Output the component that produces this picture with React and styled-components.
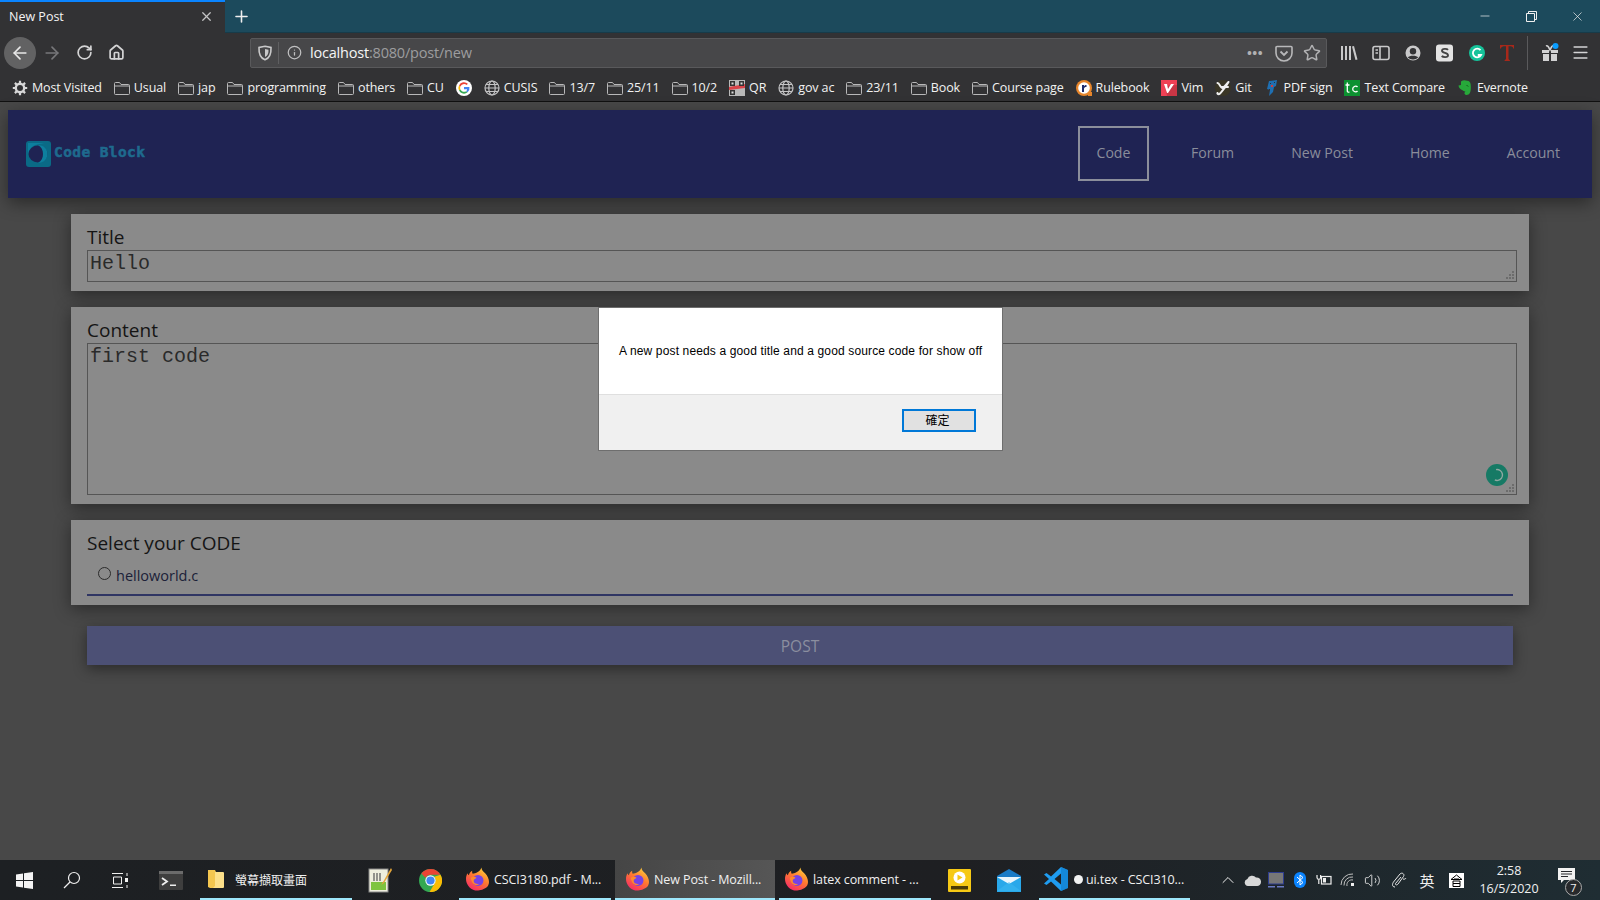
import React, { useId } from "react";
import styled, { createGlobalStyle } from "styled-components";
import {
  ArrowLeft, ArrowRight, RotateCw, Home, Star, Info, Minus, X, Plus, Menu, ChevronUp, Volume2,
} from "lucide-react";

const GlobalStyle = createGlobalStyle`
  html, body { margin: 0; padding: 0; height: 100%; overflow: hidden; }
  body { font-family: "Open Sans", "Noto Sans CJK TC", sans-serif; background: #484848; }
  * { box-sizing: border-box; }
`;

const Screen = styled.div`
  width: 1600px;
  height: 900px;
  display: flex;
  flex-direction: column;
  position: relative;
  overflow: hidden;
`;

/* ---------- tab strip ---------- */
const TabStrip = styled.div`
  height: 33px;
  flex: none;
  display: flex;
  align-items: stretch;
  background: #1c4a5c;
  border-bottom: 1px solid #173b49;
`;

const Tab = styled.div`
  width: 225px;
  height: 33px;
  display: flex;
  align-items: center;
  justify-content: space-between;
  padding: 0 11px 2px 9px;
  background: #323234;
  border-top: 2px solid #0a84ff;
  color: #f4f4f4;
  font-size: 12.5px;
`;

const NewTab = styled.div`
  width: 32px;
  display: flex;
  align-items: center;
  justify-content: center;
  color: #eee;
`;

const WindowControls = styled.div`
  margin-left: auto;
  display: flex;
`;

const WindowButton = styled.div`
  width: 46px;
  display: flex;
  align-items: center;
  justify-content: center;
  color: #f0f0f0;
`;

/* ---------- toolbar ---------- */
const Toolbar = styled.div`
  height: 37px;
  flex: none;
  display: flex;
  align-items: center;
  padding: 2px 0 0 4px;
  background: #323234;
`;

const ToolButton = styled.div`
  width: 32px;
  height: 32px;
  flex: none;
  margin-left: ${(p) => p.$ml || 0}px;
  display: flex;
  align-items: center;
  justify-content: center;
  border-radius: 50%;
  background: ${(p) => (p.$active ? "#626263" : "transparent")};
  color: ${(p) => p.$color || "#d4d4d5"};
`;

const UrlBar = styled.div`
  width: 1077px;
  height: 30px;
  margin-left: 118px;
  margin-right: 6px;
  flex: none;
  display: flex;
  align-items: center;
  padding-left: 6px;
  background: #474749;
  border: 1px solid #59595b;
  border-radius: 2px;
  font-size: 14.5px;
`;

const UrlDivider = styled.span`
  width: 1px;
  height: 22px;
  background: #5f5f61;
  margin: 0 8px 0 5px;
`;

const Host = styled.span`
  color: #f5f5f5;
  margin-left: 8px;
  letter-spacing: -0.2px;
`;

const UrlPath = styled.span`
  color: #9d9d9f;
  letter-spacing: -0.2px;
`;

const UrlActions = styled.div`
  margin-left: auto;
  display: flex;
  align-items: center;
  gap: 10px;
  padding-right: 5px;
  color: #b1b1b3;
`;

const Dots = styled.span`
  width: 20px;
  text-align: center;
  font-weight: 700;
  font-size: 13px;
  letter-spacing: 0.5px;
  line-height: 10px;
`;

const ToolSeparator = styled.span`
  width: 1px;
  height: 34px;
  margin: 0 6px 0 4px;
  background: #5a5a5c;
`;

/* ---------- bookmarks ---------- */
const Bookmarks = styled.div`
  height: 32px;
  flex: none;
  display: flex;
  align-items: center;
  gap: 12px;
  padding: 4px 0 0 12px;
  background: #323234;
  border-bottom: 1px solid #111;
  color: #f2f2f2;
  font-size: 12.5px;
  white-space: nowrap;
`;

const Bookmark = styled.div`
  display: flex;
  align-items: center;
  gap: 4px;
  letter-spacing: -0.12px;
`;

/* ---------- page ---------- */
const Page = styled.main`
  flex: 1;
  min-height: 0;
  display: flex;
  flex-direction: column;
  padding: 8px 8px 0;
  background: #484848;
`;

const NavBar = styled.nav`
  height: 88px;
  flex: none;
  display: flex;
  align-items: center;
  padding: 0 32px 0 18px;
  background: #1f2353;
  box-shadow: 0 5px 16px rgba(0, 0, 0, 0.42);
`;

const Logo = styled.div`
  display: flex;
  align-items: center;
  gap: 3px;
  color: #1e6a8e;
  font: 700 14.5px "DejaVu Sans Mono", monospace;
  letter-spacing: 0.4px;
  -webkit-text-stroke: 0.5px #1e6a8e;
`;

const LogoText = styled.span`
  margin-top: -4px;
`;

const NavLinks = styled.div`
  margin-left: auto;
  display: flex;
  align-items: center;
  gap: 17px;
`;

const NavLink = styled.a`
  height: 55px;
  margin-top: -2px;
  display: flex;
  align-items: center;
  padding: 0 ${(p) => (p.$boxed ? "16.5px" : "20px")} 2px;
  margin-right: ${(p) => (p.$boxed ? "5px" : "0")};
  border: ${(p) => (p.$boxed ? "2px solid #8b8e9b" : "none")};
  color: #8a8d9b;
  font-size: 14.1px;
`;

const NavLast = styled(NavLink)`
  padding-right: 0;
`;

const Form = styled.form`
  display: flex;
  flex-direction: column;
  gap: 16px;
  margin: 16px 63px 0;
`;

const Card = styled.section`
  height: ${(p) => p.$height}px;
  padding: 10px 12px 0 16px;
  background: #8a8a8a;
  box-shadow: 0 4px 16px rgba(0, 0, 0, 0.42);
  color: #151515;
`;

const Label = styled.label`
  display: block;
  height: 26px;
  font-size: 19px;
  line-height: 26px;
`;

const FieldWrap = styled.div`
  position: relative;
  height: ${(p) => p.$height}px;
`;

const Field = styled.textarea`
  display: block;
  width: 100%;
  height: 100%;
  padding: 3px 2px 0;
  background: transparent;
  border: 1px solid #555;
  border-radius: 0;
  outline: none;
  resize: none;
  overflow: hidden;
  color: #2a2a2a;
  font: 20px/20px "Liberation Mono", monospace;
`;

const Grip = styled.svg`
  position: absolute;
  right: 3px;
  bottom: 3px;
`;

const GrammarlyBadge = styled.svg`
  position: absolute;
  right: 9px;
  bottom: 9px;
`;

const RadioRow = styled.div`
  height: 38px;
  padding-left: 11px;
  display: flex;
  align-items: center;
  gap: 5px;
  font-size: 14.5px;
  color: #1b2138;
`;

const Radio = styled.span`
  width: 13px;
  height: 13px;
  margin-top: -4px;
  border: 1px solid #2b2b2b;
  border-radius: 50%;
`;

const Rule = styled.div`
  height: 2px;
  margin-right: 4px;
  background: #2f3563;
`;

const PostButton = styled.button`
  height: 39px;
  margin: 5px 16px 0;
  border: none;
  background: #4c5075;
  box-shadow: 0 4px 14px rgba(0, 0, 0, 0.42);
  color: #8b8e9f;
  font: 15.5px "Open Sans", sans-serif;
`;

/* ---------- alert dialog ---------- */
const Dialog = styled.div`
  position: absolute;
  left: 599px;
  top: 308px;
  width: 403px;
  height: 142px;
  display: flex;
  flex-direction: column;
  background: #f0f0f0;
  box-shadow: 0 0 0 1px #6e6e6e;
`;

const DialogBody = styled.div`
  height: 87px;
  display: flex;
  align-items: center;
  padding: 0 0 0 20px;
  background: #fff;
  border-bottom: 1px solid #dfdfdf;
  color: #000;
  font: 12px "Liberation Sans", Arial, sans-serif;
  letter-spacing: 0.14px;
`;

const DialogFoot = styled.div`
  flex: 1;
  display: flex;
  justify-content: flex-end;
  padding: 14px 26px 0 0;
`;

const OkButton = styled.button`
  width: 74px;
  height: 23px;
  padding: 0 3px 2px 0;
  border: 2px solid #0078d7;
  background: #e1e1e1;
  color: #000;
  font: 12px "Noto Sans CJK TC", sans-serif;
`;

/* ---------- taskbar ---------- */
const Taskbar = styled.footer`
  height: 40px;
  flex: none;
  display: flex;
  align-items: stretch;
  background: linear-gradient(90deg, #1d2023 0%, #1e1f22 60%, #1f2d33 100%);
  color: #f0f0f0;
  font-size: 12.5px;
`;

const TaskIcon = styled.div`
  width: 48px;
  flex: none;
  margin-left: ${(p) => p.$ml || 0}px;
  display: flex;
  align-items: center;
  justify-content: center;
`;

const TaskWindow = styled.div`
  width: ${(p) => p.$w}px;
  flex: none;
  margin-left: ${(p) => p.$ml}px;
  padding-left: ${(p) => p.$pad}px;
  display: flex;
  align-items: center;
  gap: ${(p) => p.$gap || 5}px;
  white-space: nowrap;
  border-bottom: 2px solid #9ee7fb;
  background: ${(p) => (p.$active ? "linear-gradient(90deg, #454545, #565656)" : "transparent")};
  letter-spacing: -0.1px;
`;

const CjkTitle = styled.span`
  font: 12px "Noto Sans CJK TC", sans-serif;
  letter-spacing: 0;
`;

const UnsavedDot = styled.span`
  width: 9px;
  height: 9px;
  margin: 0 -2px 0 1px;
  border-radius: 50%;
  background: #f2f2f2;
`;

const Tray = styled.div`
  margin-left: auto;
  display: flex;
  align-items: stretch;
`;

const TraySlot = styled.div`
  width: ${(p) => p.$w || 24}px;
  display: flex;
  align-items: center;
  justify-content: center;
  font-size: 15px;
`;

const Clock = styled.div`
  width: 74px;
  display: flex;
  flex-direction: column;
  align-items: center;
  justify-content: center;
  line-height: 18px;
  font-size: 12.5px;
`;

const Notify = styled.div`
  width: 54px;
  position: relative;
  display: flex;
  align-items: center;
  justify-content: center;
  padding: 0 14px 8px 0;
`;

const NotifyCount = styled.span`
  position: absolute;
  left: 19px;
  top: 19px;
  width: 17px;
  height: 17px;
  border-radius: 50%;
  border: 1px solid #aaa;
  background: #27292c;
  font-size: 11px;
  line-height: 15px;
  text-align: center;
`;

/* ---------- drawn icons ---------- */
const Folder = () => (
  <svg width="16" height="16" viewBox="0 0 16 16" fill="none" stroke="#b8b8b9" strokeWidth="1">
    <path d="M.5 3.5V13.5a1 1 0 0 0 1 1h13a1 1 0 0 0 1-1V5.5a1 1 0 0 0-1-1H7L5.5 2.5h-4a1 1 0 0 0-1 1zM.5 6h15" />
  </svg>
);

const GlobeIcon = () => (
  <svg width="16" height="16" viewBox="0 0 16 16" fill="none" stroke="#c4c4c5" strokeWidth="1.2">
    <circle cx="8" cy="8" r="7" />
    <ellipse cx="8" cy="8" rx="3.2" ry="7" />
    <path d="M1 8h14M2 4.5h12M2 11.5h12" />
  </svg>
);

const GearIcon = () => (
  <svg width="16" height="16" viewBox="0 0 16 16">
    <circle cx="8" cy="8" r="4.2" fill="none" stroke="#d8d8d8" strokeWidth="2.4" />
    <path d="M8 .8v3M8 12.2v3M.8 8h3M12.2 8h3M2.9 2.9L5 5M11 11l2.1 2.1M13.1 2.9L11 5M5 11l-2.1 2.1" stroke="#d8d8d8" strokeWidth="2.2" />
  </svg>
);

const GoogleIcon = () => (
  <svg width="16" height="16" viewBox="0 0 16 16">
    <circle cx="8" cy="8" r="8" fill="#fff" />
    <path d="M8 4a4 4 0 0 1 2.7 1l1.2-1.2A5.6 5.6 0 0 0 3 5.4l1.4 1.1A4 4 0 0 1 8 4z" fill="#ea4335" />
    <path d="M4.4 6.5L3 5.4a5.6 5.6 0 0 0 0 5.2l1.4-1.1a4 4 0 0 1 0-3z" fill="#fbbc05" />
    <path d="M4.4 9.5L3 10.6a5.6 5.6 0 0 0 8.6 1.7l-1.4-1.1A4 4 0 0 1 4.4 9.5z" fill="#34a853" />
    <path d="M13.4 7H8v2.2h3.1a2.7 2.7 0 0 1-.9 2l1.4 1.1A5.6 5.6 0 0 0 13.4 7z" fill="#4285f4" />
  </svg>
);

const QrIcon = () => (
  <svg width="16" height="16" viewBox="0 0 16 16">
    <rect width="16" height="16" fill="#b9b9b9" />
    <path d="M0 7l16-3v4L0 10z" fill="#d9444a" />
    <path d="M1 1h5v5H1zM10 1h5v5h-5zM1 10h5v5H1z" fill="#333" />
    <path d="M2.500 2.500h2v2h-2zM11.500 2.500h2v2h-2zM2.500 11.500h2v2h-2z" fill="#ddd" />
  </svg>
);

const RulebookIcon = () => (
  <svg width="16" height="16" viewBox="0 0 16 16">
    <circle cx="8" cy="8" r="8" fill="#e8862b" />
    <circle cx="8" cy="8" r="5.8" fill="#fff" />
    <path d="M6 12V5h2v1.200C8.600 5.300 9.400 5 10.500 5v2C9 7 8 7.500 8 9v3z" fill="#1d2a6b" />
    <rect x="12" y="12" width="4" height="4" fill="#e8862b" />
  </svg>
);

const VimIcon = () => (
  <svg width="16" height="16" viewBox="0 0 16 16">
    <rect width="16" height="16" fill="#ef4155" />
    <path d="M16 5v11H6L4 6z" fill="#c93645" />
    <path d="M3 4l3 0 1 5 3-5h3l-6 9H6z" fill="#fff" />
  </svg>
);

const GitIcon = () => (
  <svg width="16" height="16" viewBox="0 0 16 16" fill="none" stroke="#f0f0f0" strokeWidth="2" strokeLinecap="round">
    <circle cx="8" cy="8" r="8" fill="#3a3626" stroke="none" />
    <path d="M2.500 3c2 0 3 5 4.500 5s4-3 6.500-6M13.500 2C11 7 8 10 5 13.500c-1.500 1.500-3 .5-2.500-.5M6 7h7" />
  </svg>
);

const PdfIcon = () => (
  <svg width="16" height="16" viewBox="0 0 16 16">
    <path d="M5 1l8-1-1 6-2 1-1 5-4 4 1-6-3-1z" fill="#1f6fb2" />
    <path d="M7 5h2v2H7z" fill="#d23b3b" />
    <path d="M6 3h1v1H6zM10 2h1v1h-1zM5 9h1v1H5z" fill="#323234" />
  </svg>
);

const TextCompareIcon = () => (
  <svg width="16" height="16" viewBox="0 0 16 16">
    <rect width="16" height="16" fill="#0c9130" />
    <path d="M1.500 5h4M3.300 2.500V11c0 1 .7 1.300 2.200 1.200" stroke="#fff" strokeWidth="1.300" fill="none" />
    <path d="M13.500 7c-1-1.300-4.800-1.300-4.800 2s3.800 3.300 4.800 2" stroke="#fff" strokeWidth="1.300" fill="none" />
  </svg>
);

const EvernoteIcon = () => (
  <svg width="16" height="16" viewBox="0 0 16 16">
    <path d="M4 1.500C6 0 8 0 10 .8c2.500.2 3.500 1.500 3.700 4 .3 3 .2 6-.7 8-1 2-3 2.600-4.500 2-1.500-.6-1.300-2.500 0-3-1.500-.5-2.500-1-3-1.500C3.500 9.500 1.800 8 1.500 5.500L4 5z" fill="#27a83a" />
    <path d="M9.500 5.500c1 0 1.500.3 1.800 1" stroke="#12601e" fill="none" />
  </svg>
);

const ShieldIcon = () => (
  <svg width="16" height="16" viewBox="0 0 16 16" fill="none" stroke="#c9c9ca" strokeWidth="1.6">
    <path d="M8 1.200l6 1.300c.3 6-1 10.500-6 12.300C3 13 1.700 8.500 2 2.500z" />
    <path d="M8 4l3.500.8C11.600 8 11 10.500 8 12z" fill="#c9c9ca" stroke="none" />
  </svg>
);

const PocketIcon = () => (
  <svg width="18" height="18" viewBox="0 0 18 18" fill="none" stroke="#b8b8ba" strokeWidth="1.6">
    <path d="M2 2.500h14a1 1 0 0 1 1 1V9a8 8 0 0 1-16 0V3.500a1 1 0 0 1 1-1z" />
    <path d="M5.500 7.500L9 11l3.500-3.500" strokeWidth="1.800" />
  </svg>
);

const LibraryIcon = () => (
  <svg width="18" height="16" viewBox="0 0 18 16" fill="#c9c9ca">
    <path d="M1 1h2v14H1zM5 1h2v14H5zM9 1h2v14H9zM12 1.500l2-.5 3.500 13.500-2 .5z" />
  </svg>
);

const SidebarIcon = () => (
  <svg width="18" height="16" viewBox="0 0 18 16" fill="none" stroke="#c9c9ca" strokeWidth="1.600">
    <rect x="1" y="1.500" width="16" height="13" rx="2" />
    <path d="M8 1.500v13M3.500 5h2.500M3.500 8h2.500" />
  </svg>
);

const AccountIcon = () => (
  <svg width="16" height="16" viewBox="0 0 16 16">
    <circle cx="8" cy="8" r="7.500" fill="#c9c9ca" />
    <circle cx="8" cy="6.300" r="3.200" fill="#323234" />
    <path d="M2.800 12.500c1.500-2.500 8.900-2.500 10.400 0A7 7 0 0 1 8 14.500a7 7 0 0 1-5.200-2z" fill="#323234" />
  </svg>
);

const SkypeLikeIcon = () => (
  <svg width="18" height="18" viewBox="0 0 18 18">
    <rect width="17" height="17" y=".5" rx="3" fill="#e3e3e3" />
    <path d="M12 5.800C11 4.600 6 4.200 6 6.800c0 2.600 6 1.600 6 4.400 0 2.600-5 2.200-6.300.8" fill="none" stroke="#444" strokeWidth="1.900" />
  </svg>
);

const GrammarlyIcon = ({ size = 16 }) => (
  <svg width={size} height={size} viewBox="0 0 16 16">
    <circle cx="8" cy="8" r="8" fill="#15c39a" />
    <path d="M11.500 5.200A4.300 4.300 0 1 0 12 10H8.800" fill="none" stroke="#fff" strokeWidth="1.800" />
  </svg>
);

const RedTIcon = () => (
  <svg width="16" height="18" viewBox="0 0 16 18" fill="#a8281a">
    <path d="M1 1h14v3.500h-.8c-.3-1.800-1-2.200-4.700-2.200V15l1.500 1.500V17H5.500v-.5L7 15V2.300C3.300 2.300 2.600 2.700 2 4.500H1z" />
  </svg>
);

const GiftIcon = () => (
  <svg width="20" height="20" viewBox="0 0 20 20">
    <path d="M2 7h7v3H2zM11 7h7v3h-7zM3 11h6v7H3zM11 11h6v7h-6z" fill="#d2d2d3" />
    <path d="M6 3c2-1 3 2 4 4 1-2 2-5 4-4" fill="none" stroke="#d2d2d3" strokeWidth="1.600" />
    <circle cx="15.500" cy="3" r="3" fill="#0a9dff" />
  </svg>
);

const WindowsLogo = () => (
  <svg width="17" height="17" viewBox="0 0 17 17" fill="#f4f4f4">
    <path d="M0 2.400L7 1.400V8H0zM8 1.300L17 0V8H8zM0 9h7v6.600L0 14.600zM8 9h9v8l-9-1.300z" />
  </svg>
);

const SearchGlass = () => (
  <svg width="18" height="18" viewBox="0 0 18 18" fill="none" stroke="#f0f0f0" strokeWidth="1.200">
    <circle cx="11" cy="7" r="5.500" />
    <path d="M7 11l-6 6" />
  </svg>
);

const TaskViewIcon = () => (
  <svg width="17" height="17" viewBox="0 0 17 17" fill="none" stroke="#f0f0f0" strokeWidth="1">
    <path d="M0 1.500h11M0 15.500h11M1.500 5h8v7h-8zM15 1v3M15 13v3" />
    <rect x="13" y="6" width="3" height="4" fill="#f0f0f0" stroke="none" />
  </svg>
);

const TerminalIcon = () => (
  <svg width="24" height="19" viewBox="0 0 24 19">
    <rect width="24" height="19" rx="1" fill="#3e3e3e" />
    <rect width="24" height="3" fill="#6b6b6b" />
    <path d="M3 7l5 3.500L3 14" fill="none" stroke="#eee" strokeWidth="1.800" />
    <rect x="11" y="13.500" width="6" height="1.500" fill="#eee" />
  </svg>
);

const FilesIcon = () => (
  <svg width="16" height="20" viewBox="0 0 16 20">
    <path d="M0 1h7l1 2v16H2l-2-1z" fill="#f4c64f" />
    <path d="M7 3h8a1 1 0 0 1 1 1v14a1 1 0 0 1-1 1H5l2-2z" fill="#fde08a" />
  </svg>
);

const NotepadIcon = () => (
  <svg width="24" height="26" viewBox="0 0 24 26">
    <rect x="1" y="2" width="19" height="23" fill="#eeeedd" stroke="#888" />
    <rect x="3" y="15" width="15" height="8" fill="#7ec440" />
    <path d="M6 6v8M9 6v8M12 6v8" stroke="#555" strokeWidth="1.200" />
    <path d="M23 1L15 15l-2 3 3-2L24 3z" fill="#e3a53a" />
  </svg>
);

const ChromeIcon = () => (
  <svg width="23" height="23" viewBox="0 0 24 24">
    <circle cx="12" cy="12" r="12" fill="#34a853" />
    <path d="M12 0a12 12 0 0 1 10.400 6H12a6 6 0 0 0-5.200 3L2.500 4.700A12 12 0 0 1 12 0z" fill="#ea4335" />
    <path d="M22.400 6A12 12 0 0 1 11 24l5.200-9A6 6 0 0 0 16 8z" fill="#fbbc05" />
    <circle cx="12" cy="12" r="5.400" fill="#fff" />
    <circle cx="12" cy="12" r="4.300" fill="#4285f4" />
  </svg>
);

const FirefoxIcon = () => {
  const id = useId();
  return (
    <svg width="23" height="24" viewBox="0 0 24 24">
      <defs>
        <linearGradient id={`${id}a`} x1="0.8" y1="0" x2="0.2" y2="1">
          <stop offset="0" stopColor="#ffd43b" />
          <stop offset="0.45" stopColor="#ff7a2f" />
          <stop offset="1" stopColor="#f5266b" />
        </linearGradient>
      </defs>
      <path d="M16 0c.3 3 2 4 4 6 2.500 2.500 4 6 4 9a11.500 9 0 0 1-12 9A12 12 0 0 1 0 12c0-2.500.6-4 1.500-6 .3 1 .8 1.700 1.500 2 .5-2 1.800-3.500 3.500-4.500C6.200 5 6.500 6 7 6.500c3-.5 8-2 9-6.500z" fill={`url(#${id}a)`} />
      <circle cx="12.500" cy="13.500" r="5.700" fill="#7542e5" />
      <path d="M5 11c2-2 5-1.500 6 0-1 1-3 1-3 3s3 4 6 3c-3 3-8 1-9-6z" fill="#ff8a2b" />
    </svg>
  );
};

const PlayerIcon = () => (
  <svg width="23" height="23" viewBox="0 0 23 23">
    <rect width="23" height="23" rx="1" fill="#f6c915" />
    <circle cx="11.500" cy="8.500" r="6" fill="#fff" />
    <path d="M9.500 5.500l5 3-5 3z" fill="#f6c915" />
    <rect x="3" y="17" width="17" height="3.500" fill="#4b3c07" />
  </svg>
);

const MailIcon = () => (
  <svg width="24" height="23" viewBox="0 0 24 23">
    <path d="M0 7l12-7 12 7v16H0z" fill="#1a7bc6" />
    <path d="M0 8h24v15H0z" fill="#29a8ea" />
    <path d="M0 8h24l-12 7z" fill="#eaf6fd" />
    <path d="M0 22l12-9 12 9z" fill="#3bb7f0" opacity="0.6" />
  </svg>
);

const VscodeIcon = () => (
  <svg width="24" height="24" viewBox="0 0 24 24">
    <path d="M17 0l7 3v18l-7 3L7 14.500 2.500 18 0 16.500 5 12 0 7.500 2.500 6 7 9.500zM17 6.500L10.500 12l6.500 5.500z" fill="#1f9cf0" />
    <path d="M17 0l7 3v18l-7 3z" fill="#0e7cc9" opacity="0.6" />
  </svg>
);

const CloudIcon = () => (
  <svg width="17" height="12" viewBox="0 0 17 12" fill="#d8d8d8">
    <path d="M4 12a3.500 3.500 0 0 1-.6-6.900A5 5 0 0 1 12 3.500 4.300 4.300 0 0 1 17 8c0 2.500-2 4-3.800 4z" />
  </svg>
);

const MonitorIcon = () => (
  <svg width="16" height="16" viewBox="0 0 16 16">
    <rect x=".5" y=".5" width="15" height="11.500" fill="#777" stroke="#2d3c8f" />
    <path d="M0 14h7v1.500H0zM9 14h7v1.500H9z" fill="#6b7ac4" />
  </svg>
);

const BluetoothBadge = () => (
  <svg width="12" height="16" viewBox="0 0 12 16">
    <rect width="12" height="16" rx="6" fill="#0a84ff" />
    <path d="M3 5l6 5.500L6 13V3l3 2.500L3 11" fill="none" stroke="#fff" strokeWidth="1" />
  </svg>
);

const PowerIcon = () => (
  <svg width="16" height="12" viewBox="0 0 16 12" fill="none" stroke="#eee" strokeWidth="1.200">
    <rect x="5.500" y="2.500" width="9.500" height="7.500" />
    <rect x="7" y="4" width="3" height="4.500" fill="#eee" stroke="none" />
    <path d="M1 1v2.500a1.800 1.800 0 0 0 3.600 0V1M2.800 5.500V10" />
  </svg>
);

const WifiIcon = () => (
  <svg width="16" height="14" viewBox="0 0 16 14" fill="none" stroke="#c0c0c0" strokeWidth="1">
    <path d="M1 12A11 11 0 0 1 13 1M4 12.500A8 8 0 0 1 13 4M7 13a5 5 0 0 1 6-6" />
    <rect x="11" y="10" width="3" height="3" fill="#f0f0f0" stroke="none" />
  </svg>
);

const PenIcon = () => (
  <svg width="16" height="16" viewBox="0 0 16 16" fill="none" stroke="#e8e8e8" strokeWidth="1">
    <path d="M4 15c-3 0-3-3-1.500-5L9 2c2-2 5 0 3.500 2.500L7 12c-1 1.500-3 1-2.500-.5L10 5" />
    <path d="M12 7c1.500.5 2.500 0 3-1" />
  </svg>
);

const ImeBox = () => (
  <svg width="15" height="15" viewBox="0 0 15 15">
    <rect width="15" height="15" fill="#fff" />
    <path d="M7.500 2L2 6.500h11zM4 8h7v2.500H4zM4 10.500v3h7v-3M5 6h5" fill="none" stroke="#000" strokeWidth="1" />
  </svg>
);

const MessageIcon = () => (
  <svg width="17" height="16" viewBox="0 0 17 16">
    <path d="M0 0h17v12H6l-3 3v-3H0z" fill="#f2f2f2" />
    <path d="M3 3.500h11M3 6h11M3 8.500h7" stroke="#27292c" strokeWidth="1" />
  </svg>
);

const CodeBlockMark = () => (
  <svg width="25" height="26" viewBox="0 0 25 26">
    <rect width="25" height="26" rx="3" fill="#0a6a86" />
    <path d="M2 2h17C14 3 8 3 5 7c-2 3-3 5-3 8z" fill="#0d7f9e" />
    <ellipse cx="12" cy="13" rx="9.500" ry="8.500" fill="#1f2353" />
    <path d="M12 4c6 0 9.500 4 9.500 9s-4 9-9.500 9c3.500-2 5-5 5-9s-1.500-7-5-9z" fill="#0d7f9e" />
  </svg>
);

const GripMark = () => (
  <Grip width="8" height="8" viewBox="0 0 8 8" fill="#6c6c6c">
    <path d="M6 0h2v2H6zM3 3h2v2H3zM6 3h2v2H6zM0 6h2v2H0zM3 6h2v2H3zM6 6h2v2H6z" />
  </Grip>
);

const bookmarks = [
  { icon: <GearIcon />, label: "Most Visited" },
  { icon: <Folder />, label: "Usual" },
  { icon: <Folder />, label: "jap" },
  { icon: <Folder />, label: "programming" },
  { icon: <Folder />, label: "others" },
  { icon: <Folder />, label: "CU" },
  { icon: <GoogleIcon />, label: "" },
  { icon: <GlobeIcon />, label: "CUSIS" },
  { icon: <Folder />, label: "13/7" },
  { icon: <Folder />, label: "25/11" },
  { icon: <Folder />, label: "10/2" },
  { icon: <QrIcon />, label: "QR" },
  { icon: <GlobeIcon />, label: "gov ac" },
  { icon: <Folder />, label: "23/11" },
  { icon: <Folder />, label: "Book" },
  { icon: <Folder />, label: "Course page" },
  { icon: <RulebookIcon />, label: "Rulebook" },
  { icon: <VimIcon />, label: "Vim" },
  { icon: <GitIcon />, label: "Git" },
  { icon: <PdfIcon />, label: "PDF sign" },
  { icon: <TextCompareIcon />, label: "Text Compare" },
  { icon: <EvernoteIcon />, label: "Evernote" },
];

function App() {
  return (
    <Screen>
      <GlobalStyle />
      <TabStrip>
        <Tab>
          New Post
          <X size={15} color="#c4c4c5" />
        </Tab>
        <NewTab><Plus size={19} /></NewTab>
        <WindowControls>
          <WindowButton><Minus size={14} strokeWidth={1.2} /></WindowButton>
          <WindowButton>
            <svg width="11" height="11" viewBox="0 0 11 11" fill="none" stroke="#f0f0f0">
              <path d="M.5 2.500h8v8h-8zM2.500 2.500v-2h8v8h-2" />
            </svg>
          </WindowButton>
          <WindowButton><X size={15} strokeWidth={1.1} /></WindowButton>
        </WindowControls>
      </TabStrip>

      <Toolbar>
        <ToolButton $active $color="#e8e8e8"><ArrowLeft size={20} /></ToolButton>
        <ToolButton $color="#77777a"><ArrowRight size={20} /></ToolButton>
        <ToolButton><RotateCw size={17} strokeWidth={2.4} /></ToolButton>
        <ToolButton><Home size={17} strokeWidth={2.4} /></ToolButton>
        <UrlBar>
          <ShieldIcon />
          <UrlDivider />
          <Info size={15} color="#c0c0c1" />
          <Host>localhost</Host>
          <UrlPath>:8080/post/new</UrlPath>
          <UrlActions>
            <Dots>•••</Dots>
            <PocketIcon />
            <Star size={18} />
          </UrlActions>
        </UrlBar>
        <ToolButton><LibraryIcon /></ToolButton>
        <ToolButton><SidebarIcon /></ToolButton>
        <ToolButton><AccountIcon /></ToolButton>
        <ToolButton><SkypeLikeIcon /></ToolButton>
        <ToolButton><GrammarlyIcon /></ToolButton>
        <ToolButton $ml={-2}><RedTIcon /></ToolButton>
        <ToolSeparator />
        <ToolButton><GiftIcon /></ToolButton>
        <ToolButton $ml={-2}><Menu size={19} /></ToolButton>
      </Toolbar>

      <Bookmarks>
        {bookmarks.map((item, index) => (
          <Bookmark key={index}>
            {item.icon}
            {item.label && <span>{item.label}</span>}
          </Bookmark>
        ))}
      </Bookmarks>

      <Page>
        <NavBar>
          <Logo>
            <CodeBlockMark />
            <LogoText>Code Block</LogoText>
          </Logo>
          <NavLinks>
            <NavLink $boxed>Code</NavLink>
            <NavLink>Forum</NavLink>
            <NavLink>New Post</NavLink>
            <NavLink>Home</NavLink>
            <NavLast>Account</NavLast>
          </NavLinks>
        </NavBar>

        <Form>
          <Card $height={77}>
            <Label>Title</Label>
            <FieldWrap $height={32}>
              <Field readOnly value="Hello" />
              <GripMark />
            </FieldWrap>
          </Card>
          <Card $height={197}>
            <Label>Content</Label>
            <FieldWrap $height={152}>
              <Field readOnly value="first code" />
              <GrammarlyBadge width="22" height="22" viewBox="0 0 22 22">
                <circle cx="11" cy="11" r="11" fill="#167a65" />
                <path d="M11 5.500a5.500 5.500 0 0 1 0 11 5 5 0 0 1-3-1" fill="none" stroke="#8fa8a2" strokeWidth="1.400" transform="rotate(-10 11 11)" />
              </GrammarlyBadge>
              <GripMark />
            </FieldWrap>
          </Card>
          <Card $height={85}>
            <Label>Select your CODE</Label>
            <RadioRow>
              <Radio />
              helloworld.c
            </RadioRow>
            <Rule />
          </Card>
          <PostButton type="button">POST</PostButton>
        </Form>
      </Page>

      <Taskbar>
        <TaskIcon><WindowsLogo /></TaskIcon>
        <TaskIcon><SearchGlass /></TaskIcon>
        <TaskIcon><TaskViewIcon /></TaskIcon>
        <TaskIcon $ml={3}><TerminalIcon /></TaskIcon>
        <TaskWindow $ml={5} $w={152} $pad={8} $gap={11}>
          <FilesIcon />
          <CjkTitle>螢幕擷取畫面</CjkTitle>
        </TaskWindow>
        <TaskIcon $ml={4}><NotepadIcon /></TaskIcon>
        <TaskIcon $ml={2}><ChromeIcon /></TaskIcon>
        <TaskWindow $ml={5} $w={152} $pad={7} $gap={5}>
          <FirefoxIcon />
          CSCI3180.pdf - M...
        </TaskWindow>
        <TaskWindow $ml={4} $w={160} $pad={11} $gap={5} $active>
          <FirefoxIcon />
          New Post - Mozill...
        </TaskWindow>
        <TaskWindow $ml={4} $w={152} $pad={6} $gap={5}>
          <FirefoxIcon />
          latex comment - ...
        </TaskWindow>
        <TaskIcon $ml={4}><PlayerIcon /></TaskIcon>
        <TaskIcon $ml={2}><MailIcon /></TaskIcon>
        <TaskWindow $ml={6} $w={151} $pad={5} $gap={5}>
          <VscodeIcon />
          <UnsavedDot />
          ui.tex - CSCI310...
        </TaskWindow>
        <Tray>
          <TraySlot><ChevronUp size={20} strokeWidth={1.2} /></TraySlot>
          <TraySlot><CloudIcon /></TraySlot>
          <TraySlot><MonitorIcon /></TraySlot>
          <TraySlot><BluetoothBadge /></TraySlot>
          <TraySlot><PowerIcon /></TraySlot>
          <TraySlot><WifiIcon /></TraySlot>
          <TraySlot><Volume2 size={17} strokeWidth={1.2} /></TraySlot>
          <TraySlot $w={30}><PenIcon /></TraySlot>
          <TraySlot $w={26}>英</TraySlot>
          <TraySlot $w={32}><ImeBox /></TraySlot>
          <Clock>
            <span>2:58</span>
            <span>16/5/2020</span>
          </Clock>
          <Notify>
            <MessageIcon />
            <NotifyCount>7</NotifyCount>
          </Notify>
        </Tray>
      </Taskbar>

      <Dialog>
        <DialogBody>A new post needs a good title and a good source code for show off</DialogBody>
        <DialogFoot>
          <OkButton type="button">確定</OkButton>
        </DialogFoot>
      </Dialog>
    </Screen>
  );
}

export default App;
